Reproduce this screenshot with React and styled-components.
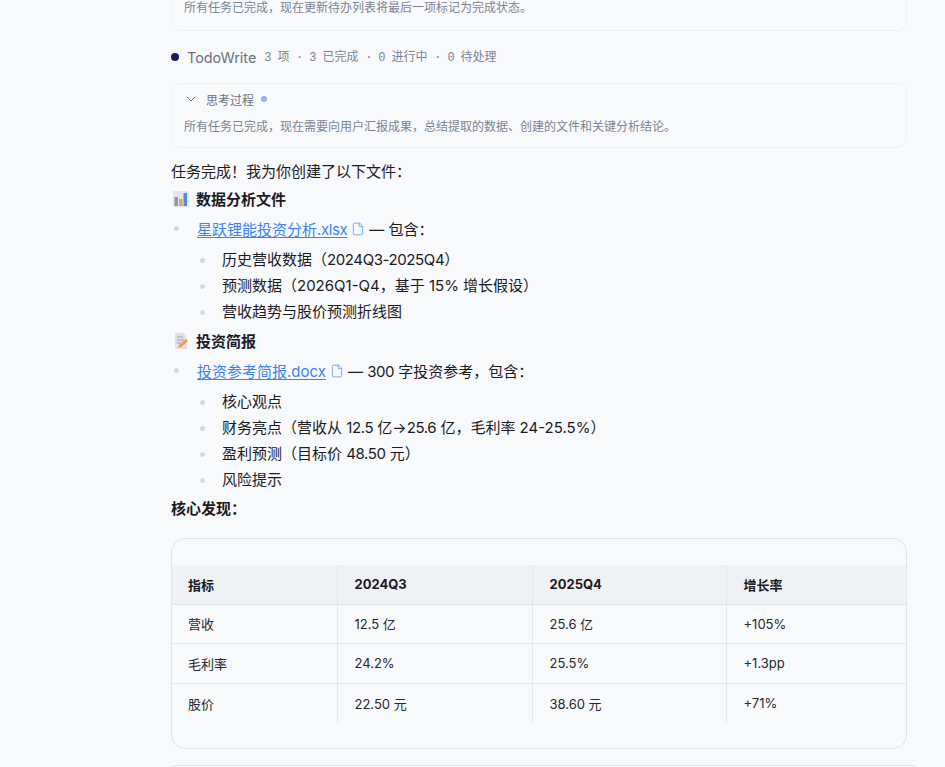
import React from 'react';
import styled, { createGlobalStyle } from 'styled-components';
import { ChevronDown, File } from 'lucide-react';

const GlobalStyle = createGlobalStyle`
    html, body {
        margin: 0;
        height: 100%;
        overflow: hidden;
        background: #f8f9fb;
    }
    body {
        font-family: Inter, "Noto Sans CJK SC", sans-serif;
        font-size: 15px;
        color: #1a1a1f;
        text-spacing-trim: space-all;
    }
`;

const BarChartEmoji = () => (
    <svg width="16" height="16" viewBox="0 0 16 16">
        <rect width="16" height="16" rx="1" fill="#e4e6ea" />
        <rect x="1.5" y="6" width="3.5" height="9" fill="#8d97a5" />
        <rect x="6" y="8" width="3.5" height="7" fill="#e8a35e" />
        <rect x="10.5" y="2" width="3.5" height="13" fill="#4a90dc" />
    </svg>
);

const MemoEmoji = () => (
    <svg width="16" height="16" viewBox="0 0 16 16">
        <path d="M2 0h8l4 4v12H2z" fill="#e3dfe8" />
        <path d="M4 4h6M4 7h7M4 10h4" stroke="#a79cb6" strokeWidth="1" />
        <path d="M5 15l1-3 7-6 2 2-7 6z" fill="#ee9c45" />
    </svg>
);

const rows = [
    ['营收', '12.5 亿', '25.6 亿', '+105%'],
    ['毛利率', '24.2%', '25.5%', '+1.3pp'],
    ['股价', '22.50 元', '38.60 元', '+71%'],
];

function App() {
    return (
        <Page>
            <GlobalStyle />
            <Column>
                <ThinkCard $scrolled>
                    <ThinkText>所有任务已完成，现在更新待办列表将最后一项标记为完成状态。</ThinkText>
                </ThinkCard>

                <ToolRow>
                    <ToolDot />
                    <ToolName>TodoWrite</ToolName>
                    <ToolMeta>
                        <MetaNum>3 </MetaNum>项<MetaNum> · 3 </MetaNum>已完成<MetaNum> · 0 </MetaNum>进行中<MetaNum> · 0 </MetaNum>待处理
                    </ToolMeta>
                </ToolRow>

                <ThinkCard>
                    <ThinkHeader>
                        <ChevronDown size={16} strokeWidth={1.5} color="#6b7280" />
                        <span>思考过程</span>
                        <PulseDot />
                    </ThinkHeader>
                    <ThinkText>所有任务已完成，现在需要向用户汇报成果，总结提取的数据、创建的文件和关键分析结论。</ThinkText>
                </ThinkCard>

                <Para>任务完成！我为你创建了以下文件：</Para>
                <Heading><BarChartEmoji /><strong>数据分析文件</strong></Heading>
                <List>
                    <Item>
                        <FileLink>星跃锂能投资分析<Lat>.xlsx</Lat></FileLink>
                        <FileIcon size={14} strokeWidth={1.5} />
                        <span>— 包含：</span>
                    </Item>
                </List>
                <SubList>
                    <SubItem>历史营收数据（<Lat>2024Q3-2025Q4</Lat>）</SubItem>
                    <SubItem>预测数据（2026Q1-Q4，基于 15% 增长假设）</SubItem>
                    <SubItem>营收趋势与股价预测折线图</SubItem>
                </SubList>

                <Heading><MemoEmoji /><strong>投资简报</strong></Heading>
                <List>
                    <Item>
                        <FileLink>投资参考简报.docx</FileLink>
                        <FileIcon size={14} strokeWidth={1.5} />
                        <span>— <Lat>300</Lat> 字投资参考，包含：</span>
                    </Item>
                </List>
                <SubList>
                    <SubItem>核心观点</SubItem>
                    <SubItem>财务亮点（营收从 <Lat>12.5</Lat> 亿→<Lat>25.6</Lat> 亿，毛利率 24-25.5%）</SubItem>
                    <SubItem>盈利预测（目标价 <Lat>48.50</Lat> 元）</SubItem>
                    <SubItem>风险提示</SubItem>
                </SubList>

                <Conclusion>核心发现：</Conclusion>

                <TableCard>
                    <Table>
                        <colgroup>
                            <Col $w={165} />
                            <Col $w={195} />
                            <Col $w={194} />
                            <col />
                        </colgroup>
                        <thead>
                            <tr>
                                <Th>指标</Th>
                                <Th>2024Q3</Th>
                                <Th>2025Q4</Th>
                                <Th>增长率</Th>
                            </tr>
                        </thead>
                        <tbody>
                            {rows.map((row) => (
                                <tr key={row[0]}>
                                    {row.map((cell) => <Td key={cell}>{cell}</Td>)}
                                </tr>
                            ))}
                        </tbody>
                    </Table>
                </TableCard>
                <Rule />
            </Column>
        </Page>
    );
}

export default App;

const Page = styled.div`
    height: 767px;
    overflow: hidden;
    padding-left: 171px;
`;

const Column = styled.div`
    width: 736px;
    margin-top: -30px;
`;

const ThinkCard = styled.div`
    box-sizing: border-box;
    border: 1px solid #eef0f3;
    border-radius: 10px;
    padding: ${(p) => (p.$scrolled ? '28px 12px 14px' : '7px 12px 13px')};
    height: ${(p) => (p.$scrolled ? '61px' : '65px')};
`;

const ThinkHeader = styled.div`
    display: flex;
    align-items: center;
    gap: 7px;
    height: 16px;
    margin-left: -1px;
    font-size: 12px;
    color: #6b7280;
`;

const PulseDot = styled.i`
    width: 6px;
    height: 6px;
    border-radius: 50%;
    background: #93b5f8;
`;

const ThinkText = styled.div`
    font-size: 12px;
    line-height: 18px;
    color: #7b8494;
    white-space: nowrap;
    ${ThinkHeader} + & {
        margin-top: 11px;
    }
`;

const ToolRow = styled.div`
    display: flex;
    align-items: center;
    height: 20px;
    margin: 16px 0 16px;
`;

const ToolDot = styled.i`
    width: 8px;
    height: 8px;
    border-radius: 50%;
    background: #1a1a5e;
    margin-right: 8px;
`;

const ToolName = styled.span`
    font-size: 14.4px;
    color: #6b7280;
    margin-right: 8px;
`;

const ToolMeta = styled.span`
    font-size: 12px;
    line-height: 16px;
    color: #7b8494;
    white-space: pre;
`;

const MetaNum = styled.span`
    font-family: "Liberation Mono", monospace;
    letter-spacing: -0.6px;
`;

const Lat = styled.span`
    letter-spacing: -0.4px;
`;

const Para = styled.div`
    line-height: 16px;
    margin-top: 16px;
`;

const Heading = styled.div`
    display: flex;
    align-items: center;
    gap: 7px;
    height: 20px;
    margin-top: 8px;
    padding-left: 2px;
    strong {
        font-weight: 700;
    }
    svg {
        margin-top: 2px;
    }
`;

const Conclusion = styled.div`
    font-weight: 700;
    line-height: 20px;
    margin-top: 9px;
`;

const List = styled.ul`
    list-style: none;
    margin: 10px 0 0;
    padding: 0;
`;

const Item = styled.li`
    position: relative;
    display: flex;
    align-items: center;
    gap: 4px;
    height: 20px;
    padding-left: 26px;
    &::before {
        content: "";
        position: absolute;
        left: 3px;
        top: 8px;
        width: 5px;
        height: 5px;
        border-radius: 50%;
        background: #d5d8df;
    }
`;

const FileLink = styled.a`
    color: #3b82f6;
    text-decoration: underline;
    text-underline-offset: 2px;
`;

const FileIcon = styled(File)`
    color: #60a5fa;
    margin-top: 2px;
`;

const SubList = styled.ul`
    list-style: none;
    margin: 12px 0 0;
    padding: 0;
`;

const SubItem = styled.li`
    position: relative;
    line-height: 20px;
    padding-left: 51px;
    margin-bottom: 6px;
    &:last-child {
        margin-bottom: 0;
    }
    &::before {
        content: "";
        position: absolute;
        left: 29px;
        top: 8px;
        width: 5px;
        height: 5px;
        border-radius: 50%;
        background: #d5d8df;
    }
`;

const TableCard = styled.div`
    box-sizing: border-box;
    height: 211px;
    margin-top: 19px;
    padding-top: 26px;
    border: 1px solid #e2e4e9;
    border-radius: 14px;
`;

const Table = styled.table`
    width: 100%;
    table-layout: fixed;
    border-collapse: collapse;
    font-size: 13px;
`;

const Col = styled.col`
    width: ${(p) => p.$w}px;
`;

const Th = styled.th`
    box-sizing: border-box;
    height: 39px;
    padding: 0 16px;
    text-align: left;
    font-weight: 700;
    background: #f0f1f5;
    border-bottom: 1px solid #dfe1e6;
    border-right: 1px solid #e5e7eb;
    & + & {
        padding-left: 17px;
    }
    &:last-child {
        border-right: none;
    }
`;

const Td = styled.td`
    box-sizing: border-box;
    height: 39.5px;
    padding: 0 16px;
    border-bottom: 1px solid #e5e7eb;
    border-right: 1px solid #e5e7eb;
    color: #26262c;
    & + & {
        padding-left: 17px;
    }
    &:last-child {
        border-right: none;
    }
    tr:last-child & {
        border-bottom: none;
    }
`;

const Rule = styled.hr`
    border: none;
    border-top: 1px solid #e5e7eb;
    margin: 16px 0 0;
    width: 744px;
`;
